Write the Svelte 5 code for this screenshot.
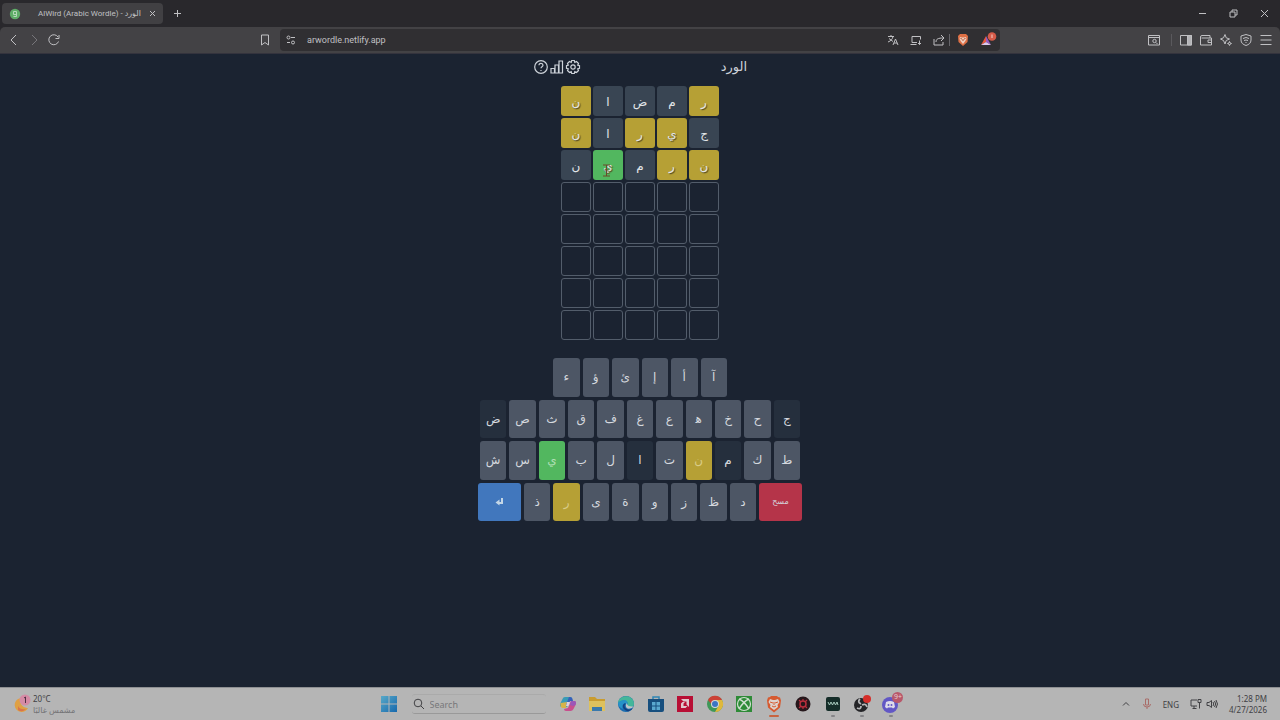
<script>
  const guesses = [
    [['ن', 'present'], ['ا', 'absent'], ['ض', 'absent'], ['م', 'absent'], ['ر', 'present']],
    [['ن', 'present'], ['ا', 'absent'], ['ر', 'present'], ['ي', 'present'], ['ج', 'absent']],
    [['ن', 'absent'], ['ي', 'correct'], ['م', 'absent'], ['ر', 'present'], ['ن', 'present']]
  ];
  const emptyRow = Array(5).fill(['', 'empty']);
  const board = [...guesses, ...Array(5).fill(emptyRow)];

  const keyRows = [
    { name: 'short', keys: ['ء', 'ؤ', 'ئ', 'إ', 'أ', 'آ'] },
    { name: 'full', keys: ['ض', 'ص', 'ث', 'ق', 'ف', 'غ', 'ع', 'ه\u200d', 'خ', 'ح', 'ج'] },
    { name: 'full', keys: ['ش', 'س', 'ي', 'ب', 'ل', 'ا', 'ت', 'ن', 'م', 'ك', 'ط'] },
    { name: 'wide', keys: ['enter', 'ذ', 'ر', 'ى', 'ة', 'و', 'ز', 'ظ', 'د', 'مسح'] }
  ];

  const keyStatus = {
    'ض': 'used', 'ج': 'used', 'ا': 'used', 'م': 'used',
    'ي': 'correct', 'ن': 'present', 'ر': 'present',
    'مسح': 'delete'
  };
</script>

<div class="screen">
  <header class="browser">
    <div class="tabs">
      <div class="tab">
        <svg width="12" height="12" viewBox="0 0 12 12">
          <circle cx="6" cy="6" r="5.2" fill="#5fae68" stroke="none" />
          <path d="M4.500 3.500h3v3h-3zM7.500 6v2.500h-3" stroke="#b5d8b8" />
        </svg>
        <span class="tab-title">AlWird (Arabic Wordle) - الورد</span>
        <button aria-label="Close tab">
          <svg width="7" height="7" viewBox="0 0 7 7"><path d="M1 1l5 5M6 1L1 6" /></svg>
        </button>
      </div>
      <button aria-label="New tab">
        <svg width="9" height="9" viewBox="0 0 9 9"><path d="M4.5 1v7M1 4.5h7" /></svg>
      </button>
      <div class="window-buttons">
        <button aria-label="Minimize"><svg width="9" height="9" viewBox="0 0 9 9"><path d="M1 4.5h7" /></svg></button>
        <button aria-label="Restore"><svg width="9" height="9" viewBox="0 0 9 9"><path d="M1 3h5v5H1zM3 3V1h5v5H6" /></svg></button>
        <button aria-label="Close"><svg width="9" height="9" viewBox="0 0 9 9"><path d="M1 1l7 7M8 1L1 8" /></svg></button>
      </div>
    </div>

    <div class="toolbar">
      <div class="nav">
        <button aria-label="Back"><svg width="12" height="12" viewBox="0 0 12 12"><path d="M8 1L3 6l5 5" /></svg></button>
        <button class="dim" aria-label="Forward"><svg width="12" height="12" viewBox="0 0 12 12"><path d="M4 1l5 5-5 5" /></svg></button>
        <button aria-label="Reload">
          <svg width="12" height="12" viewBox="0 0 12 12"><path d="M10.5 7.5A5 5 0 1 1 10 3M11 1v3.5H7.5" /></svg>
        </button>
      </div>
      <button aria-label="Bookmark">
        <svg width="12" height="12" viewBox="0 0 12 12"><path d="M2.500 1h7v10L6 8.500 2.500 11z" /></svg>
      </button>
      <div class="address">
        <svg width="10" height="10" viewBox="0 0 10 10"><circle cx="2.500" cy="2.500" r="1.500" /><path d="M5 2.500h4M1 7.500h3" /><circle cx="7" cy="7.500" r="1.500" /></svg>
        <input aria-label="Address" value="arwordle.netlify.app" />
        <button aria-label="Translate">
          <svg width="12" height="12" viewBox="0 0 12 12"><path d="M1 2.500h6M4 1v1.500M2 4.500l4 3M6 2.500C5.500 5 4 7 1 8M6 11l2.500-6L11 11M7 9h3" /></svg>
        </button>
        <button aria-label="Send to device">
          <svg width="12" height="12" viewBox="0 0 12 12"><path d="M7 8.500H2V2.500h8.500v3M.5 10.500h6M9.500 6.500v4M8 9l1.500 1.500L11 9" /></svg>
        </button>
        <button class="share" aria-label="Share">
          <svg width="12" height="12" viewBox="0 0 12 12"><path d="M1 5v6h9V8M3 8c0-3 2-4 7.500-4M8 1l3 3-3 3" /></svg>
        </button>
        <button aria-label="Brave Shields">
          <svg width="12" height="14" viewBox="0 0 12 14">
            <path d="M3 1h6l2 2-.5 6L6 13 1.500 9 1 3z" fill="#df7045" stroke="none" />
            <path d="M3 4l2 .5h2L9 4l.5 2L8 8.500 6 11 4 8.500 2.500 6z" fill="#efd0c2" stroke="none" />
            <path d="M3.500 5.500l1.500.5M8.500 5.500L7 6M6 6v2" stroke="#b5522d" />
          </svg>
        </button>
        <button class="rewards" aria-label="Brave Rewards">
          <svg width="17" height="16" viewBox="0 0 17 16">
            <path d="M6 4L1 13l5-3z" fill="#e65a3e" stroke="none" />
            <path d="M6 4l5 9-5-3z" fill="#9a5ac0" stroke="none" />
            <path d="M1 13h10l-5-3z" fill="#dfc8ee" stroke="none" />
            <circle cx="12" cy="4.500" r="4.300" fill="#d45a48" stroke="none" />
            <path d="M12 2.500v3.500" stroke="#f3d0c8" />
          </svg>
        </button>
      </div>
      <div class="extras">
        <button aria-label="Search tabs"><svg width="12" height="12" viewBox="0 0 12 12"><path d="M.5 1.500h11v9.500H.5zM.5 3.500h11M8 8.500L9.500 10" /><circle cx="6.500" cy="7" r="1.700" /></svg></button>
        <span class="divider"></span>
        <button aria-label="Sidebar"><svg width="12" height="12" viewBox="0 0 12 12"><path d="M.5 1.500h11v9.500H.5z" /><path d="M7.500 1.500h4V11h-4z" fill="#b4b4b7" /></svg></button>
        <button aria-label="Wallet"><svg width="12" height="12" viewBox="0 0 12 12"><path d="M10 4V1.500H2Q.5 1.500.5 3v8h11V4h-10M11.500 6H8v2.500h3.500" /></svg></button>
        <button aria-label="Leo AI"><svg width="12" height="12" viewBox="0 0 12 12"><path d="M5 .5l1.200 3.300 3.300 1.200-3.300 1.500L5 10 3.500 6.500.5 5l3-1.200zM9.500 7.500l.6 1.500 1.400.5-1.400.6-.6 1.400-.5-1.400-1.500-.6L9 9z" /></svg></button>
        <button aria-label="VPN"><svg width="12" height="12" viewBox="0 0 12 12"><path d="M6 .5l5 1.500v4c0 3-2 4.500-5 5.500C3 10.500 1 9 1 6V2zM3 4.500q3-2 6 0M4 6.500q2-1 4 0M6 8v1" /></svg></button>
        <button aria-label="Menu"><svg width="12" height="12" viewBox="0 0 12 12"><path d="M.5 1.500h11M.5 6h11M.5 10.500h11" /></svg></button>
      </div>
    </div>
  </header>

  <main>
    <div class="game-head">
      <div class="game-actions">
        <button aria-label="Help">
          <svg width="16" height="16" viewBox="0 0 16 16"><circle cx="8" cy="8" r="6.300" /><path d="M6 6.200C6 3.700 10 3.900 10 6.200 10 7.800 8 7.700 8 9.200M8 11v1" /></svg>
        </button>
        <button aria-label="Statistics">
          <svg width="16" height="16" viewBox="0 0 16 16"><path d="M2 9.500h3.500V14H2zM6 6h3.500v8H6zM10 2h3.500v12H10z" /></svg>
        </button>
        <button aria-label="Settings">
          <svg width="16" height="16" viewBox="0 0 16 16"><path d="M6.700 1.500h2.600l.5 1.800 1.700-.8 2 2-.8 1.700 1.800.5v2.600l-1.800.5.8 1.700-2 2-1.700-.8-.5 1.800H6.700l-.5-1.800-1.700.8-2-2 .8-1.700-1.800-.5V6.700l1.800-.5-.8-1.700 2-2 1.700.8z" /><circle cx="8" cy="8" r="2.200" /></svg>
        </button>
      </div>
      <h1>الورد</h1>
    </div>

    <div class="board">
      {#each board as row}
        {#each row as [letter, status]}
          <div class="cell {status}">{letter}</div>
        {/each}
      {/each}
      <svg class="pointer" width="9" height="13" viewBox="0 0 9 13"><path d="M1 1h7M4.500 1v11M1 12h7M2.500 6h4" /></svg>
    </div>

    <div class="keyboard">
      {#each keyRows as row}
        <div class="key-row {row.name}">
          {#each row.keys as key}
            {#if key === 'enter'}
              <button class="key enter" aria-label="Enter">
                <svg width="9" height="9" viewBox="0 0 9 9"><path d="M6 1h2v6H4.500v1.500L.5 5.500l4-3V5H6z" fill="#c3d6e6" /></svg>
              </button>
            {:else}
              <button class="key {keyStatus[key] ?? ''}">{key}</button>
            {/if}
          {/each}
        </div>
      {/each}
    </div>
  </main>

  <footer class="taskbar">
    <div class="weather">
      <svg width="19" height="20" viewBox="0 0 19 20">
        <path d="M8 4A7 7 0 1 0 15 14 7 7 0 0 1 8 4" fill="#dfa044" />
        <path d="M5 12q2 4 8 3-4 4-8 1z" fill="#d8744c" />
        <circle cx="12" cy="6" r="5.500" fill="#d58aa5" />
        <path d="M11 4l1.500-1v6" fill="none" stroke="#503044" />
      </svg>
      <div>
        <div>20°C</div>
        <div class="muted">مشمس غالبًا</div>
      </div>
    </div>

    <div class="apps">
      <button aria-label="Start">
        <svg width="18" height="18" viewBox="0 0 18 18">
          <defs><linearGradient id="win" x2="1" y2="1"><stop stop-color="#58a9c8" /><stop offset="1" stop-color="#1668ad" /></linearGradient></defs>
          <path d="M1 1h7.500v7.500H1zM9.500 1H17v7.500H9.500zM1 9.500h7.500V17H1zM9.500 9.500H17V17H9.500z" fill="url(#win)" />
        </svg>
      </button>
      <label class="search">
        <svg width="12" height="12" viewBox="0 0 12 12"><circle cx="5" cy="5" r="3.800" /><path d="M8 8l3 3" /></svg>
        <input type="text" placeholder="Search" aria-label="Search" />
      </label>
      <div class="pinned">
        <button aria-label="Copilot">
          <svg width="18" height="18" viewBox="0 0 18 18">
            <path d="M6 2h5q2 0 2.500 2L11 5 8 12H3Q0 12 1.500 8l2-4Q4 2 6 2" fill="#399bb6" />
            <path d="M1.500 8L8 7l-1 6H4Q1 13 1.500 8" fill="#d6b348" />
            <path d="M12 6h3q3 0 1.500 4l-2 4q-1 2-3 2H7q-2 0-2-2l4-1z" fill="#c84f8d" />
            <path d="M10 2h1q2 0 2.500 2l.5 2h-3L9 11l-2-1z" fill="#365fba" />
            <path d="M12 6h3q3 0 1.500 4L14 11l-3-1z" fill="#9b57b8" />
            <path d="M8 7h3l-1.500 4H7z" fill="#e0d1da" />
          </svg>
        </button>
        <button aria-label="File Explorer">
          <svg width="18" height="18" viewBox="0 0 18 18"><path d="M1 2h6l2 2h8v12H1z" fill="#c99c30" /><path d="M1 6h16v10H1z" fill="#ddc15e" /><path d="M4 12h10v4H4z" fill="#3979ad" /></svg>
        </button>
        <button aria-label="Edge">
          <svg width="18" height="18" viewBox="0 0 18 18">
            <circle cx="9" cy="9" r="8" fill="#1b6cae" />
            <path d="M1 8C2-1 17-1 17 9c0 4-5 4-7 2 3-5-4-8-9-3" fill="#44b69a" />
            <path d="M1 8c5-5 11-3 9 2-3-3-6 0-4 4-3-1-5-3-5-6" fill="#2692c8" />
            <path d="M9 8q-3 3 0 5.500t7-.5q-2 3-5 3.500Q5 14 6 10q1-2 3-2" fill="#123f80" />
            <path d="M10 8q0 4 6.500 3.500L15 13q-5 2-6-1-1-2 1-4" fill="#bdc4c8" />
          </svg>
        </button>
        <button aria-label="Microsoft Store">
          <svg width="18" height="18" viewBox="0 0 18 18"><path d="M6 5V2h6v3" fill="none" stroke="#2f86b5" stroke-width="1.500" /><path d="M1 4h16v11q0 2-2 2H3q-2 0-2-2z" fill="#174f7e" /><path d="M5 7h3.500v3.500H5zM9.500 7H13v3.500H9.500zM5 11.500h3.500V15H5zM9.500 11.500H13V15H9.500z" fill="#5aa9cf" /></svg>
        </button>
        <button aria-label="AMD Software">
          <svg width="18" height="18" viewBox="0 0 18 18"><path d="M1 1h16v16H1z" fill="#b80f35" /><path d="M5 4h8v8l-2.500-2.500v-3h-3zM5 8.500V13h4.500l2-2H7.500V8.500L9 7H6.500z" fill="#dfc7cc" /></svg>
        </button>
        <button aria-label="Chrome">
          <svg width="18" height="18" viewBox="0 0 18 18"><circle cx="9" cy="9" r="8" fill="#3f9858" /><path d="M2 5a8 8 0 0 1 14 0H9L6 10z" fill="#cc4136" /><path d="M16 5A8 8 0 0 1 9 17l4-7-3-5z" fill="#dfb83b" /><circle cx="9" cy="9" r="4" fill="#d8d8d8" /><circle cx="9" cy="9" r="3" fill="#3d75c4" /></svg>
        </button>
        <button aria-label="Xbox">
          <svg width="18" height="18" viewBox="0 0 18 18">
            <path d="M1 1h16v16H1z" fill="#2e8b37" />
            <circle cx="9" cy="9" r="6.500" fill="none" stroke="#d0dfd0" stroke-width="1.200" />
            <path d="M4 4q5 2 10 10M14 4Q9 6 4 14" fill="none" stroke="#d0dfd0" stroke-width="1.500" />
          </svg>
        </button>
        <button class="running active" aria-label="Brave">
          <svg width="18" height="18" viewBox="0 0 18 18"><path d="M6 1h6l1 1 2 .5 1 3-1 7-6 5-6-5-1-7 1-3L5 2z" fill="#d65a30" /><path d="M5 4l3 1h2l3-1 1.500 3-2 3 .5 2-4 3-4-3 .5-2-2-3z" fill="#ddd2cd" /><path d="M5 7l3 1M13 7l-3 1M9 7v3M7 11l2 1 2-1" fill="none" stroke="#d65a30" /></svg>
        </button>
        <button aria-label="Game launcher">
          <svg width="18" height="18" viewBox="0 0 18 18"><circle cx="9" cy="9" r="7.500" fill="#26171b" /><circle cx="9" cy="9" r="3" fill="none" stroke="#b92e3d" stroke-width="1.500" /><path d="M5 5l2 2M9 4v2M13 5l-2 2M5 13l2-2M9 14v-2M13 13l-2-2" stroke="#b92e3d" stroke-width="1.200" /></svg>
        </button>
        <button class="running" aria-label="Audio driver">
          <svg width="18" height="18" viewBox="0 0 18 18"><rect x="2" y="2" width="14" height="14" rx="2" fill="#152d29" /><path d="M4 7l1.500 3L7 7l1.500 3L10 7l1.500 3L13 7l1 3" fill="none" stroke="#a6c8bb" /></svg>
        </button>
        <button class="running" aria-label="OBS Studio">
          <svg width="18" height="18" viewBox="0 0 18 18"><circle cx="8" cy="10" r="7" fill="#242427" /><path d="M8 9q-4-2-1-5M9 10q4-2 5 2M8 11q0 4-4 2" fill="none" stroke="#b5b5b7" stroke-width="1.800" /><circle cx="14" cy="4" r="4" fill="#d52e2a" /></svg>
        </button>
        <button class="running" aria-label="Discord">
          <svg width="18" height="18" viewBox="0 0 18 18"><circle cx="8" cy="10" r="8" fill="#6257c5" /><path d="M4 7q4-2 8 0l1 5-2 1.500-1-1H6l-1 1L3 12z" fill="#dedbea" /><circle cx="6.500" cy="10" r="1" fill="#6257c5" /><circle cx="9.500" cy="10" r="1" fill="#6257c5" /></svg>
          <span class="badge">9+</span>
        </button>
      </div>
    </div>

    <div class="tray">
      <svg width="10" height="10" viewBox="0 0 10 10"><path d="M2 6.500l3-3 3 3" /></svg>
      <svg width="10" height="12" viewBox="0 0 10 12"><path d="M3.500 1h3v6h-3z" stroke="#a96c68" /><path d="M1.500 6q0 3 3.500 3t3.500-3M5 9v2" stroke="#a96c68" /></svg>
      <span>ENG</span>
      <div class="status">
        <svg width="12" height="12" viewBox="0 0 12 12"><path d="M7 2H1v6h6M4 8v2.500M2.500 10.500h4M8 1.500h3v3H8zM9.500 4.500v6" /></svg>
        <svg width="12" height="12" viewBox="0 0 12 12"><path d="M1 4.500h2l2.500-2v7L3 7.500H1zM7 4q1.500 2 0 4M8.500 3q2.500 3 0 6M10 2q3 4 0 8" /></svg>
      </div>
      <div class="clock">
        <div>1:28 PM</div>
        <div>4/27/2026</div>
      </div>
    </div>
  </footer>
</div>

<style>
  :global(body) {
    background: #1b2331;
  }

  .screen {
    min-height: 100vh;
    display: flex;
    flex-direction: column;
    font-family: "Noto Sans", "DejaVu Sans", sans-serif;
    color: #cdd2d9;
  }

  button {
    display: flex;
    align-items: center;
    justify-content: center;
    padding: 0;
    border: 0;
    background: none;
    color: inherit;
    font-family: inherit;
    cursor: pointer;
  }

  input {
    min-width: 0;
    padding: 0;
    border: 0;
    outline: 0;
    background: none;
    color: inherit;
    font-family: inherit;
  }

  svg {
    display: block;
    flex-shrink: 0;
  }

  .browser svg,
  .tray svg,
  .search svg,
  .game-head svg,
  .pointer {
    fill: none;
    stroke: currentColor;
  }

  .browser {
    background: #29282c;
    color: #c0c0c3;
    font-family: Roboto, "DejaVu Sans", sans-serif;
  }

  .tabs {
    display: flex;
    align-items: center;
    gap: 10px;
    height: 27px;
    padding: 0 11px 0 2px;
  }

  .tab {
    display: flex;
    align-items: center;
    box-sizing: border-box;
    width: 161px;
    height: 21px;
    padding: 0 7px;
    border-radius: 4px;
    background: #414043;
  }

  .tab-title {
    flex: 1;
    margin-left: 17px;
    font-size: 8px;
    white-space: nowrap;
  }

  .window-buttons {
    display: flex;
    gap: 22px;
    margin-left: auto;
  }

  .toolbar {
    display: grid;
    grid-template-columns: 258px 14px minmax(0, 728px) 1fr;
    align-items: center;
    box-sizing: border-box;
    height: 27px;
    border-bottom: 1px solid #34333d;
    border-radius: 5px 5px 0 0;
    background: #434245;
  }

  .nav {
    display: flex;
    gap: 8px;
    padding-left: 8px;
  }

  .dim {
    color: #77767a;
  }

  .address {
    display: flex;
    align-items: center;
    gap: 11px;
    height: 22px;
    margin-left: 8px;
    padding: 0 3px 0 6px;
    border-radius: 4px;
    background: #302f32;
  }

  .address input {
    flex: 1;
    font-size: 9px;
  }

  .share {
    padding-right: 4px;
    margin-right: -4px;
    border-right: 1px solid #66656a;
  }

  .extras {
    display: flex;
    justify-content: flex-end;
    align-items: center;
    gap: 8px;
    padding-right: 8px;
  }

  .divider {
    width: 1px;
    height: 12px;
    margin-left: 3px;
    background: #5a595d;
  }

  main {
    flex: 1;
    display: flex;
    flex-direction: column;
    align-items: center;
    background: #1b2331;
  }

  .game-head {
    display: flex;
    justify-content: space-between;
    align-items: center;
    width: 214px;
    height: 25px;
    margin-bottom: 7px;
  }

  .game-head svg {
    stroke-width: 1.2;
  }

  .game-actions {
    display: flex;
  }

  h1 {
    margin: 0;
    font-family: "DejaVu Sans", sans-serif;
    font-size: 13px;
    font-weight: 400;
  }

  .board {
    position: relative;
    display: grid;
    grid-template-columns: repeat(5, 30px);
    grid-auto-rows: 30px;
    gap: 2px;
    font-family: "DejaVu Sans", sans-serif;
    font-size: 12px;
  }

  .cell {
    display: flex;
    align-items: center;
    justify-content: center;
    box-sizing: border-box;
    padding-top: 2px;
    border-radius: 3px;
    line-height: 1;
    color: #e2e5e9;
  }

  .empty {
    border: 1px solid #535d6b;
  }

  .absent {
    background: #394553;
  }

  .present {
    background: #b6a035;
  }

  .correct {
    background: #52b75f;
  }

  .present,
  .correct {
    text-shadow: 1px 1px 1px #4d4520;
  }

  .pointer {
    position: absolute;
    top: 78px;
    left: 41px;
    color: #6b4a2a;
  }

  .keyboard {
    display: grid;
    grid-template-rows: repeat(4, 1fr);
    justify-items: center;
    gap: 3px;
    height: 163px;
    margin-top: 18px;
  }

  .key-row {
    display: grid;
    gap: 3px;
  }

  .short {
    width: 174px;
    grid-template-columns: repeat(6, 1fr);
  }

  .full {
    width: 320px;
    grid-template-columns: repeat(11, 1fr);
  }

  .wide {
    width: 324px;
    grid-template-columns: 43px repeat(8, 1fr) 43px;
  }

  .key {
    border-radius: 3px;
    background: #4d5665;
    color: #d5d9df;
    font-family: "DejaVu Sans", sans-serif;
    font-size: 12px;
  }

  .key.used {
    background: #252f3d;
  }

  .key.present {
    background: #b6a035;
    color: #d9cc87;
    text-shadow: none;
  }

  .key.correct {
    background: #52b75f;
    color: #b0dfb5;
    text-shadow: none;
  }

  .key.enter {
    background: #4177bd;
  }

  .key.delete {
    background: #b53449;
    font-size: 8px;
  }

  .taskbar {
    display: grid;
    grid-template-columns: 1fr auto 1fr;
    align-items: center;
    height: 33px;
    box-sizing: border-box;
    border-top: 1px solid #8f9093;
    background: #b5b5b5;
    color: #414144;
    font-size: 8px;
    line-height: 11px;
  }

  .weather {
    display: flex;
    align-items: center;
    gap: 1px;
    padding-left: 13px;
  }

  .muted {
    color: #737376;
  }

  .apps,
  .pinned {
    display: flex;
    align-items: center;
  }

  .search {
    display: flex;
    align-items: center;
    gap: 5px;
    box-sizing: border-box;
    width: 134px;
    height: 20px;
    margin: 0 13px 0 14px;
    padding-left: 1px;
    border-top: 1px solid #aaaaaa;
    border-bottom: 1px solid #999999;
    border-radius: 3px;
  }

  .search input {
    flex: 1;
    font-size: 9px;
  }

  .search input::placeholder {
    color: #77777a;
    opacity: 1;
  }

  .pinned {
    justify-content: space-between;
    width: 342px;
  }

  .pinned button {
    position: relative;
  }

  .running::after {
    content: "";
    position: absolute;
    bottom: -4px;
    left: 7px;
    width: 4px;
    height: 2px;
    border-radius: 1px;
    background: #858588;
  }

  .active::after {
    left: 4px;
    width: 10px;
    background: #c8643f;
  }

  .badge {
    position: absolute;
    top: -3px;
    right: -3px;
    width: 11px;
    height: 11px;
    border-radius: 6px;
    background: #b8586b;
    color: #e7cbd0;
    font-size: 7px;
  }

  .tray {
    display: flex;
    justify-content: flex-end;
    align-items: center;
    gap: 11px;
    padding-right: 13px;
    white-space: nowrap;
  }

  .status {
    display: flex;
    gap: 4px;
  }

  .clock {
    text-align: right;
  }
</style>
